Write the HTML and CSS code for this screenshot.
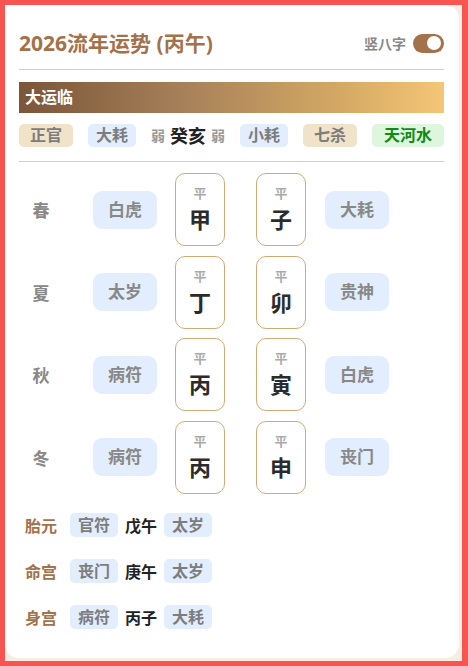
FILE: index.html
```html
<!DOCTYPE html>
<html lang="zh-CN">
<head>
    <meta charset="UTF-8">
    <meta name="viewport" content="width=device-width, initial-scale=1.0">
    <title>2026流年运势</title>
    <link rel="stylesheet" href="styles.css">
</head>
<body>
    <div class="frame">
        <div class="card">
            <div class="header">
                <h1 class="title">2026流年运势 (丙午)</h1>
                <div class="switch-wrap">
                    <span class="switch-label">竖八字</span>
                    <span class="switch"><span class="knob"></span></span>
                </div>
            </div>
            <div class="divider"></div>

            <div class="banner">大运临</div>
            <div class="luck-row">
                <span class="chip beige">正官</span>
                <span class="chip blue">大耗</span>
                <span class="luck-mid">
                    <span class="weak">弱</span>
                    <span class="luck-gz">癸亥</span>
                    <span class="weak">弱</span>
                </span>
                <span class="chip blue">小耗</span>
                <span class="chip beige">七杀</span>
                <span class="chip green">天河水</span>
            </div>
            <div class="divider"></div>

            <div class="pillars">
                <span class="season">春</span>
                <span class="star">白虎</span>
                <div class="pillar"><span class="state">平</span><span class="gz">甲</span></div>
                <div class="pillar"><span class="state">平</span><span class="gz">子</span></div>
                <span class="star">大耗</span>

                <span class="season">夏</span>
                <span class="star">太岁</span>
                <div class="pillar"><span class="state">平</span><span class="gz">丁</span></div>
                <div class="pillar"><span class="state">平</span><span class="gz">卯</span></div>
                <span class="star">贵神</span>

                <span class="season">秋</span>
                <span class="star">病符</span>
                <div class="pillar"><span class="state">平</span><span class="gz">丙</span></div>
                <div class="pillar"><span class="state">平</span><span class="gz">寅</span></div>
                <span class="star">白虎</span>

                <span class="season">冬</span>
                <span class="star">病符</span>
                <div class="pillar"><span class="state">平</span><span class="gz">丙</span></div>
                <div class="pillar"><span class="state">平</span><span class="gz">申</span></div>
                <span class="star">丧门</span>
            </div>

            <div class="extra">
                <div class="extra-row">
                    <span class="extra-label">胎元</span>
                    <span class="chip blue small">官符</span>
                    <span class="extra-gz">戊午</span>
                    <span class="chip blue small">太岁</span>
                </div>
                <div class="extra-row">
                    <span class="extra-label">命宫</span>
                    <span class="chip blue small">丧门</span>
                    <span class="extra-gz">庚午</span>
                    <span class="chip blue small">太岁</span>
                </div>
                <div class="extra-row">
                    <span class="extra-label">身宫</span>
                    <span class="chip blue small">病符</span>
                    <span class="extra-gz">丙子</span>
                    <span class="chip blue small">大耗</span>
                </div>
            </div>
        </div>
    </div>
</body>
</html>
```

FILE: styles.css
```css
* {
    box-sizing: border-box;
}
body {
    margin: 0;
    font-family: "Noto Sans", "Noto Sans CJK SC", sans-serif;
}
.frame {
    width: 468px;
    height: 666px;
    border: 5px solid #f85552;
    border-right-width: 6px;
    background: #f6eee3;
    padding: 0 3px 3px 0;
}
.card {
    background: white;
    height: 100%;
    border-radius: 0 14px 14px 14px;
    padding: 24px 15px 0 14px;
}
.header {
    display: flex;
    align-items: center;
    justify-content: space-between;
    height: 28px;
}
.title {
    margin: 0;
    font-size: 21px;
    font-weight: bold;
    color: #a3714a;
    line-height: 28px;
}
.switch-wrap {
    display: flex;
    align-items: center;
    gap: 7px;
}
.switch-label {
    font-size: 14px;
    font-weight: bold;
    color: #888;
}
.switch {
    display: flex;
    justify-content: flex-end;
    align-items: center;
    width: 31px;
    height: 19px;
    border-radius: 10px;
    background: #a3714a;
    padding: 0 3px;
}
.knob {
    width: 14px;
    height: 14px;
    border-radius: 50%;
    background: white;
}
.divider {
    height: 1px;
    background: #cfcfcf;
    margin-top: 12px;
}
.banner {
    margin-top: 12px;
    height: 31px;
    line-height: 31px;
    padding-left: 6px;
    color: white;
    font-size: 16px;
    font-weight: bold;
    background: linear-gradient(to right, #7a5538, #a8825a 40%, #d4a863 75%, #f4c676);
}
.luck-row {
    display: flex;
    justify-content: space-between;
    align-items: center;
    margin-top: 9px;
}
.luck-row + .divider {
    margin-top: 13px;
}
.chip {
    height: 23px;
    line-height: 23px;
    border-radius: 5px;
    font-size: 16px;
    font-weight: bold;
    color: #7d7d7d;
    padding: 0 8px;
}
.chip.beige {
    background: #f1e3c9;
    padding: 0 11px;
}
.chip.blue {
    background: #e2eefd;
}
.chip.green {
    background: #ddf6dd;
    color: #138a14;
    padding: 0 12px;
}
.luck-mid {
    display: flex;
    align-items: center;
    gap: 5px;
}
.weak {
    font-size: 14px;
    font-weight: bold;
    color: #999;
}
.luck-gz {
    font-size: 18px;
    font-weight: bold;
    color: #222;
}
.pillars {
    display: grid;
    grid-template-columns: 74px 82px 81px 69px 63px;
    grid-auto-rows: 73px;
    row-gap: 9.67px;
    align-items: center;
    margin-top: 11px;
}
.season {
    width: 44px;
    text-align: center;
    font-size: 17px;
    font-weight: bold;
    color: #888;
}
.star {
    justify-self: start;
    width: 64px;
    height: 38px;
    line-height: 38px;
    text-align: center;
    border-radius: 9px;
    background: #e2eefd;
    font-size: 17px;
    font-weight: bold;
    color: #888;
}
.pillar {
    width: 50px;
    height: 73px;
    border: 1px solid #d2ab74;
    border-radius: 10px;
    display: flex;
    flex-direction: column;
    align-items: center;
    padding-top: 11px;
}
.state {
    font-size: 13px;
    line-height: 16px;
    font-weight: bold;
    color: #aaa;
}
.gz {
    margin-top: 3px;
    font-size: 22px;
    line-height: 30px;
    font-weight: bold;
    color: #2b2b2b;
}
.extra {
    margin-top: 19px;
    display: flex;
    flex-direction: column;
    gap: 22px;
    padding-left: 6px;
}
.extra-row {
    display: flex;
    align-items: center;
    gap: 7px;
    height: 24px;
}
.extra-label {
    font-size: 16px;
    font-weight: bold;
    color: #a3714a;
    margin-right: 6px;
}
.chip.small {
    height: 24px;
    line-height: 24px;
    padding: 0 8px;
}
.extra-gz {
    font-size: 16px;
    font-weight: bold;
    color: #222;
}
```
